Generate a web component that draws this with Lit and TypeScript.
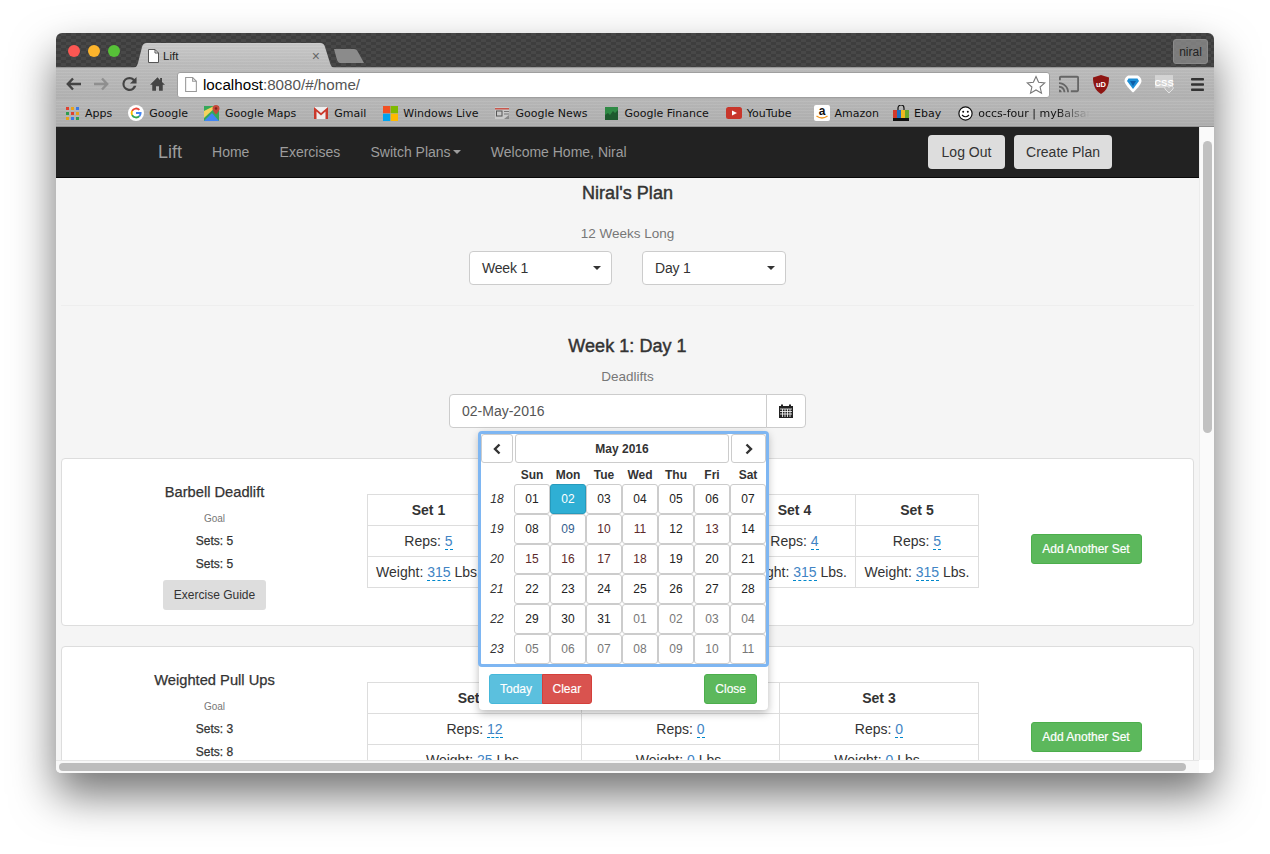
import { LitElement, html, css, svg } from "lit";
import { customElement } from "lit/decorators.js";

type Mark = { name: string; icon: unknown; cls?: string; ml?: number };

const appsIcon = svg`<svg width="13" height="13" viewBox="0 0 13 13">
  <rect x="0" y="0" width="3" height="3" fill="#e0402f"/><rect x="5" y="0" width="3" height="3" fill="#e8a21b"/><rect x="10" y="0" width="3" height="3" fill="#3b78e7"/>
  <rect x="0" y="5" width="3" height="3" fill="#2d9d4e"/><rect x="5" y="5" width="3" height="3" fill="#e0402f"/><rect x="10" y="5" width="3" height="3" fill="#e8a21b"/>
  <rect x="0" y="10" width="3" height="3" fill="#e8a21b"/><rect x="5" y="10" width="3" height="3" fill="#3b78e7"/><rect x="10" y="10" width="3" height="3" fill="#2d9d4e"/></svg>`;
const googleIcon = svg`<svg width="16" height="16" viewBox="0 0 16 16">
  <circle cx="8" cy="8" r="8" fill="#fff"/>
  <path d="M11.4 4.9A4.6 4.6 0 0 0 4.1 5.9" fill="none" stroke="#ea4335" stroke-width="1.9"/>
  <path d="M4.1 5.9a4.6 4.6 0 0 0 0 4.2" fill="none" stroke="#fbbc05" stroke-width="1.9"/>
  <path d="M4.1 10.1a4.6 4.6 0 0 0 7.3 1" fill="none" stroke="#34a853" stroke-width="1.9"/>
  <path d="M11.4 11.1A4.6 4.6 0 0 0 12.6 8H8" fill="none" stroke="#4285f4" stroke-width="1.9"/></svg>`;
const mapsIcon = svg`<svg width="16" height="16" viewBox="0 0 16 16">
  <rect y="1" width="15" height="15" fill="#35a85a"/>
  <path d="M0 16 L8 8 L15 16Z" fill="#4285f4"/>
  <path d="M0 6 L10 1 H13 L0 13Z" fill="#f4d35e"/>
  <path d="M12 0a3.5 3.5 0 0 1 3.5 3.5C15.500 6 12 9.500 12 9.500S8.500 6 8.500 3.500A3.500 3.500 0 0 1 12 0Z" fill="#c5483a"/>
  <circle cx="12" cy="3.500" r="1.200" fill="#7c231a"/></svg>`;
const gmailIcon = svg`<svg width="14" height="12" viewBox="0 0 14 12">
  <rect width="14" height="12" fill="#eee"/>
  <path d="M0 0 L7 6 L14 0 V12 H11.500 V4.500 L7 8.500 L2.500 4.500 V12 H0Z" fill="#c9392c"/></svg>`;
const winIcon = svg`<svg width="15" height="15" viewBox="0 0 15 15">
  <rect width="7.300" height="7.300" fill="#f25022"/><rect x="7.700" width="7.300" height="7.300" fill="#7fba00"/>
  <rect y="7.700" width="7.300" height="7.300" fill="#00a4ef"/><rect x="7.700" y="7.700" width="7.300" height="7.300" fill="#ffb900"/></svg>`;
const newsIcon = svg`<svg width="14" height="12" viewBox="0 0 14 12">
  <rect width="14" height="12" fill="#c9c9c9"/><rect y="1" width="14" height="1.500" fill="#c8574c"/>
  <rect x="1.500" y="4" width="5.500" height="5" fill="none" stroke="#555" stroke-width="1"/>
  <rect x="9" y="4" width="5" height="1" fill="#777"/><rect x="9" y="6.500" width="5" height="1" fill="#777"/>
  <path d="M9 12 L14 8 V12Z" fill="#888"/></svg>`;
const financeIcon = svg`<svg width="13" height="13" viewBox="0 0 13 13">
  <rect width="13" height="13" fill="#2f8a45"/>
  <path d="M0 8 L3 6 L5 8 L8 4 L10 6 L13 3 V13 H0Z" fill="#1e5a2e"/></svg>`;
const ytIcon = svg`<svg width="16" height="12" viewBox="0 0 16 12">
  <rect width="16" height="12" rx="2.500" fill="#c8362b"/><path d="M6 3.500 L11 6 L6 8.500Z" fill="#fff"/></svg>`;
const amazonIcon = svg`<svg width="16" height="16" viewBox="0 0 16 16">
  <rect width="16" height="16" rx="2" fill="#fff"/>
  <text x="8" y="10" font-family="Liberation Sans" font-weight="700" font-size="12" text-anchor="middle" fill="#111">a</text>
  <path d="M2.500 11 Q8 15 13.500 11" fill="none" stroke="#f0961e" stroke-width="1.500"/></svg>`;
const ebayIcon = svg`<svg width="16" height="16" viewBox="0 0 16 16">
  <path d="M5 5 V3 a3 3 0 0 1 6 0 V5" fill="none" stroke="#111" stroke-width="1.200"/>
  <rect y="5" width="4" height="8" fill="#d2392b"/><rect x="4" y="5" width="4" height="8" fill="#1f6fc0"/>
  <rect x="8" y="5" width="4" height="8" fill="#efb71f"/><rect x="12" y="5" width="4" height="8" fill="#6aa62d"/>
  <rect y="13" width="16" height="3" fill="#111"/></svg>`;
const smileIcon = svg`<svg width="15" height="15" viewBox="0 0 15 15">
  <circle cx="7.500" cy="7.500" r="6.600" fill="#fff" stroke="#111" stroke-width="1.200"/>
  <circle cx="5.200" cy="5.800" r="1" fill="#111"/><circle cx="9.800" cy="5.800" r="1" fill="#111"/>
  <path d="M4 9 Q7.500 12.500 11 9" fill="none" stroke="#111" stroke-width="1.100"/></svg>`;

const marks: Mark[] = [
  { name: "Apps", icon: appsIcon },
  { name: "Google", icon: googleIcon },
  { name: "Google Maps", icon: mapsIcon },
  { name: "Gmail", icon: gmailIcon, ml: 1 },
  { name: "Windows Live", icon: winIcon },
  { name: "Google News", icon: newsIcon },
  { name: "Google Finance", icon: financeIcon },
  { name: "YouTube", icon: ytIcon, ml: 1 },
  { name: "Amazon", icon: amazonIcon, ml: 6 },
  { name: "Ebay", icon: ebayIcon, ml: -2 },
  { name: "occs-four | myBalsan", icon: smileIcon, cls: "fade" },
];

const docIcon = (w: number, h: number, stroke: string) => svg`<svg width=${w} height=${h} viewBox="0 0 11 14">
  <path d="M.5.500H7L10.500 4V13.500H.5Z" fill="#fff" stroke=${stroke}/><path d="M7 .5V4H10.500" fill="none" stroke=${stroke}/></svg>`;

type Day = { d: string; k?: string };
const tint = new Set(["10", "11", "13", "15", "16", "17", "18"]);
const mk = (n: number, k?: string): Day => {
  const d = String(n).padStart(2, "0");
  if (k) return { d, k };
  if (d === "02") return { d, k: "sel" };
  if (d === "09") return { d, k: "blue" };
  if (tint.has(d)) return { d, k: "red" };
  return { d };
};
const weeks: { w: number; days: Day[] }[] = [
  { w: 18, days: [1, 2, 3, 4, 5, 6, 7].map((n) => mk(n)) },
  { w: 19, days: [8, 9, 10, 11, 12, 13, 14].map((n) => mk(n)) },
  { w: 20, days: [15, 16, 17, 18, 19, 20, 21].map((n) => mk(n)) },
  { w: 21, days: [22, 23, 24, 25, 26, 27, 28].map((n) => mk(n)) },
  { w: 22, days: [...[29, 30, 31].map((n) => mk(n)), ...[1, 2, 3, 4].map((n) => mk(n, "off"))] },
  { w: 23, days: [5, 6, 7, 8, 9, 10, 11].map((n) => mk(n, "off")) },
];

const exercises = [
  { name: "Barbell Deadlift", sets: 5, goal: 5, widths: [122, 122, 122, 122, 123], rows: [[5, 315], [5, 315], [5, 315], [4, 315], [5, 315]] },
  { name: "Weighted Pull Ups", sets: 3, goal: 8, widths: [214, 198, 199], rows: [[12, 25], [0, 0], [0, 0]] },
];

@customElement("app-root")
export class AppRoot extends LitElement {
  static styles = css`
    :host { display: block; box-sizing: border-box; width: 1270px; height: 854px; padding: 33px 56px 0; background: #fff; overflow: hidden; font-family: "Liberation Sans", Arial, sans-serif; font-size: 14px; color: #333; }
    * { box-sizing: border-box; }
    .window { width: 1158px; height: 740px; display: flex; flex-direction: column; border-radius: 6px 6px 5px 5px; box-shadow: 0 22px 44px rgba(0,0,0,.55); overflow: hidden; background: #fff; }

    .tabstrip { height: 35px; flex: none; display: flex; align-items: flex-end; padding-left: 12px; background: repeating-conic-gradient(#484848 0 25%, #3e3e3e 0 50%) 0 0 / 10px 6px; border-bottom: 1px solid #999; }
    .lights { display: flex; gap: 8px; align-self: flex-start; margin-top: 12px; }
    .light { width: 12px; height: 12px; border-radius: 50%; }
    .r { background: #fc5753; } .y { background: #fdb42c; } .g { background: #57c138; }
    .tab { width: 203px; height: 25px; margin: 0 0 -1px 12px; display: flex; align-items: center; padding: 0 15px 0 16px; gap: 4px; font-size: 11.500px; color: #222;
      background: repeating-linear-gradient(0deg, rgba(255,255,255,.04) 0 1px, rgba(0,0,0,.02) 1px 3px), linear-gradient(#cbcbcb, #bbb);
      clip-path: path("M0 25 C4 25 5 23 6 20 L10 4 C11 1 12 0 15 0 L188 0 C191 0 192 1 193 4 L198 20 C199 23 200 25 203 25 Z"); }
    .tab .ttl { flex: 1; }
    .tab .x { font-size: 14px; color: #666; line-height: 1; }
    .newtab { width: 30px; height: 14px; margin: 0 0 4px -1px; background: #8b8b8b; clip-path: path("M0 0 H20 C22 0 23 1 24 3 L30 14 H6 C5 14 4 13 3 11 Z"); }
    .profile { margin: 0 6px 3px auto; width: 35px; height: 25px; display: flex; align-items: center; justify-content: center; font-size: 12px; color: #222; background: rgba(150,150,150,.7); border: 1px solid #8a8a8a; border-radius: 3px; }

    .toolbar { height: 32px; flex: none; display: flex; align-items: center; padding-left: 10px; background: repeating-linear-gradient(0deg, rgba(255,255,255,.04) 0 1px, rgba(0,0,0,.02) 1px 3px), linear-gradient(#bdbdbd, #b2b2b2); }
    .nav-ic { width: 15px; height: 16px; margin-right: 13px; display: flex; }
    .omni { width: 873px; height: 26px; flex: none; margin: 1px 0 0 -1px; background: #fff; border: 1px solid #9f9f9f; border-radius: 3px; display: flex; align-items: center; padding: 0 3px 0 7px; font-size: 15.200px; color: #000; }
    .omni .url { margin-left: 6px; flex: 1; }
    .omni .url span { color: #555; }
    .slots { display: flex; margin-left: 3px; }
    .slot { width: 32px; height: 22px; display: flex; align-items: center; justify-content: center; }

    .marks { flex: none; display: flex; align-items: center; padding-left: 8px; gap: 16px; border-bottom: 1px solid #8f8f8f; height: 27px; background: repeating-linear-gradient(0deg, rgba(255,255,255,.04) 0 1px, rgba(0,0,0,.02) 1px 3px), linear-gradient(#b9b9b9, #b0b0b0); font-family: "DejaVu Sans", sans-serif; font-size: 11px; color: #111; }
    .mark { display: flex; align-items: center; gap: 5px; white-space: nowrap; }
    .ib { width: 16px; height: 16px; flex: none; display: flex; align-items: center; justify-content: center; }
    .ib svg { display: block; flex: none; }
    .fade { width: 112px; overflow: hidden; -webkit-mask-image: linear-gradient(90deg, #000 70%, transparent 100%); mask-image: linear-gradient(90deg, #000 70%, transparent 100%); }

    .viewport { flex: 1; min-height: 0; display: grid; grid-template-columns: 1143px 15px; grid-template-rows: 633px 13px; }
    .page { overflow: hidden; background: #f5f5f5; }
    .vbar { background: #fafafa; border-left: 1px solid #ececec; padding: 14px 2px 0 3px; }
    .vthumb { height: 292px; background: #c1c1c1; border-radius: 5px; }
    .hbar { background: #f8f8f8; border-top: 1px solid #e6e6e6; padding: 2px 13px 2px 3px; }
    .hthumb { height: 8px; background: #bdbdbd; border-radius: 4px; }
    .corner { background: #fff; }

    .navbar { height: 51px; background: #222; border-bottom: 1px solid #080808; display: flex; align-items: center; padding: 0 87px 0 102px; color: #9d9d9d; }
    .brand { font-size: 18px; margin-right: 30px; }
    .link { margin-right: 30.200px; display: flex; align-items: center; white-space: nowrap; }
    .caret { width: 0; height: 0; margin-left: 2px; border: 4px solid transparent; border-top-color: #9d9d9d; border-bottom: 0; }
    .navbtns { margin-left: auto; display: flex; gap: 9px; }
    .gbtn { height: 34px; display: flex; align-items: center; justify-content: center; background: #ddd; color: #333; border-radius: 4px; }
    .logout { width: 77px; }
    .create { width: 98px; }

    .body { padding: 5px 5px 0; display: flex; flex-direction: column; align-items: center; }
    h2 { margin: 0; font-size: 18px; line-height: 20px; font-weight: 400; letter-spacing: .05px; -webkit-text-stroke: .45px #333; }
    .muted { color: #777; line-height: 20px; font-size: 13.500px; }
    .plan-sub { margin-top: 21px; }
    .selects { margin-top: 7px; display: flex; gap: 30px; }
    .select { width: 143px; height: 34px; padding: 0 10px 0 12px; display: flex; align-items: center; justify-content: space-between; background: #fff; border: 1px solid #ccc; border-radius: 4px; letter-spacing: -.2px; }
    .select.w2 { width: 144px; }
    .select i { width: 0; height: 0; border: 4.500px solid transparent; border-top-color: #333; border-bottom: 0; }
    hr { width: 100%; height: 1px; margin: 20px 0 0; border: 0; background: #eee; }
    .week { margin-top: 30px; }
    .sub2 { margin-top: 11px; }
    .group { position: relative; margin-top: 7px; width: 357px; height: 34px; display: flex; }
    .input { flex: 1; padding-left: 12px; display: flex; align-items: center; color: #555; background: #fff; border: 1px solid #ccc; border-radius: 4px 0 0 4px; }
    .addon { width: 40px; margin-left: -1px; display: flex; align-items: center; justify-content: center; background: #fff; border: 1px solid #ccc; border-radius: 0 4px 4px 0; }

    .pop { position: absolute; z-index: 5; left: 30px; top: 37px; width: 289px; height: 279px; background: #fff; border-radius: 4px; box-shadow: 0 3px 9px rgba(0,0,0,.28); }
    .ring { margin: 0 -1px; height: 236px; border: 3px solid #7eb6f2; border-radius: 4px; background: #fff; display: grid; grid-template-columns: 33px repeat(7, 36px); grid-template-rows: 30px 20px repeat(6, 30px); font-size: 12px; }
    .cbtn { border: 1px solid #ccc; border-radius: 3px; display: flex; align-items: center; justify-content: center; background: #fff; color: #333; }
    .prev { margin: 0 1px 1px 0; }
    .ttlbtn { grid-column: 2 / span 6; margin: 0 1px 1px 1px; font-weight: 700; }
    .next { margin: 0 0 1px 1px; }
    .dow { font-weight: 700; display: flex; align-items: flex-end; justify-content: center; padding-bottom: 2px; }
    .wk { font-style: italic; display: flex; align-items: center; justify-content: center; color: #333; padding-right: 1px; }
    .day { color: #222; }
    .day.off { color: #777; }
    .day.blue { color: #34618f; }
    .day.red { color: #5c2a2a; }
    .day.sel { background: #2fafd4; border-color: #269abc; color: #fff; }
    .popfoot { display: flex; padding: 7px 11px 0 10px; font-size: 12px; color: #fff; -webkit-text-stroke: .15px #fff; }
    .pb { height: 30px; padding: 0 10px; display: flex; align-items: center; border: 1px solid; border-radius: 3px; }
    .today { background: #5bc0de; border-color: #46b8da; border-radius: 3px 0 0 3px; }
    .clear { background: #d9534f; border-color: #d43f3a; border-radius: 0 3px 3px 0; margin-left: -1px; padding: 0 9.500px; }
    .close { background: #5cb85c; border-color: #4cae4c; margin-left: auto; }

    .card { width: 100%; flex: none; height: 168px; background: #fff; border: 1px solid #ddd; border-radius: 4px; display: grid; grid-template-columns: 305px 612px 1fr; }
    .first { margin-top: 30px; }
    .next-card { margin-top: 20px; height: 168px; }
    .left { display: flex; flex-direction: column; align-items: center; padding-top: 23px; }
    .name { line-height: 20px; font-size: 14.700px; -webkit-text-stroke: .25px #333; }
    .goal { margin-top: 10px; font-size: 10px; line-height: 14px; color: #777; }
    .setsline { margin-top: 9px; font-size: 12px; line-height: 14px; -webkit-text-stroke: .25px #333; }
    .goal + .setsline { margin-top: 8px; }
    .guide { margin-top: 9px; height: 30px; padding: 0 11px; font-size: 12px; display: flex; align-items: center; background: #ddd; border-radius: 3px; }
    table { margin-top: 35px; width: 611px; height: 94px; border-collapse: collapse; table-layout: fixed; align-self: start; }
    th, td { border: 1px solid #ddd; height: 31px; padding: 0; text-align: center; font-weight: 400; white-space: nowrap; }
    th { font-weight: 700; }
    .ed { color: #4184c4; border-bottom: 1px dashed #08c; }
    .rt { display: flex; justify-content: center; padding: 75px 0 0 0; align-items: flex-start; }
    .add { height: 30px; width: 111px; display: flex; align-items: center; justify-content: center; font-size: 12px; color: #fff; -webkit-text-stroke: .2px #fff; background: #5cb85c; border: 1px solid #4cae4c; border-radius: 3px; }
  `;

  private card(ex: (typeof exercises)[number], cls: string) {
    return html`<section class="card ${cls}">
      <div class="left">
        <div class="name">${ex.name}</div>
        <div class="goal">Goal</div>
        <div class="setsline">Sets: ${ex.sets}</div>
        <div class="setsline">Sets: ${ex.goal}</div>
        <div class="guide">Exercise Guide</div>
      </div>
      <table>
        <colgroup>${ex.widths.map((w) => html`<col style="width:${w}px" />`)}</colgroup>
        <tr>${ex.rows.map((_, i) => html`<th>Set ${i + 1}</th>`)}</tr>
        <tr>${ex.rows.map((r) => html`<td>Reps: <span class="ed">${r[0]}</span></td>`)}</tr>
        <tr>${ex.rows.map((r) => html`<td>Weight: <span class="ed">${r[1]}</span> Lbs.</td>`)}</tr>
      </table>
      <div class="rt"><div class="add">Add Another Set</div></div>
    </section>`;
  }

  render() {
    return html`<div class="window">
      <div class="tabstrip">
        <div class="lights"><div class="light r"></div><div class="light y"></div><div class="light g"></div></div>
        <div class="tab">${docIcon(11, 14, "#555")}<span class="ttl">Lift</span><span class="x">×</span></div>
        <div class="newtab"></div>
        <div class="profile">niral</div>
      </div>
      <div class="toolbar">
        <span class="nav-ic"><svg width="15" height="16" viewBox="0 0 15 16"><path d="M7 2.500 L1.800 8 L7 13.500 M2 8 H15" fill="none" stroke="#444" stroke-width="2.400"/></svg></span>
        <span class="nav-ic"><svg width="15" height="16" viewBox="0 0 15 16"><path d="M8 2.500 L13.200 8 L8 13.500 M13 8 H0" fill="none" stroke="#8f8f8f" stroke-width="2.400"/></svg></span>
        <span class="nav-ic"><svg width="16" height="16" viewBox="3.500 3.500 17 17"><path fill="#444" d="M17.650 6.350A7.950 7.950 0 0 0 12 4a8 8 0 1 0 7.730 10h-2.900A5.400 5.400 0 1 1 12 6.600c1.500 0 2.800.6 3.800 1.600L12.500 11.500H20V4z"/></svg></span>
        <span class="nav-ic"><svg width="16" height="16" viewBox="2 3 20 18"><path fill="#444" d="M10 21v-6h4v6h5v-8h3L18 9.400V4h-2.500v3.100L12 3 2 13h3v8z"/></svg></span>
        <div class="omni">
          ${docIcon(12, 15, "#999")}
          <div class="url">localhost<span>:8080/#/home/</span></div>
          <svg width="20" height="20" viewBox="0 0 20 20"><path d="M10 1.500 L12.600 7.300 L18.800 7.900 L14.100 12 L15.500 18.200 L10 15 L4.500 18.200 L5.900 12 L1.200 7.900 L7.400 7.300Z" fill="#fff" stroke="#777" stroke-width="1.100"/></svg>
        </div>
        <div class="slots">
          <span class="slot"><svg width="20" height="18" viewBox="1 3 22 18"><path fill="#666" d="M21 3H3c-1.100 0-2 .9-2 2v3h2V5h18v14h-7v2h7c1.100 0 2-.9 2-2V5c0-1.100-.9-2-2-2zM1 18v3h3c0-1.660-1.340-3-3-3zm0-4v2c2.760 0 5 2.240 5 5h2c0-3.870-3.130-7-7-7zm0-4v2c4.970 0 9 4.030 9 9h2c0-6.080-4.930-11-11-11z"/></svg></span>
          <span class="slot"><svg width="18" height="19" viewBox="0 0 18 19"><path d="M9 0 L17 2.500 C17 10 15 15.500 9 19 C3 15.500 1 10 1 2.500Z" fill="#8e1512"/><text x="9" y="11.500" font-family="Liberation Sans" font-weight="700" font-size="7.500" text-anchor="middle" fill="#fff">uD</text></svg></span>
          <span class="slot"><svg width="18" height="18" viewBox="0 0 18 18"><path d="M5 .5 H13 C15 .5 17.500 3 17.500 6 C17.500 9 12 15 9 17.500 C6 15 .5 9 .5 6 C.5 3 3 .5 5 .5Z" fill="#fff"/><path d="M4.500 3.500 H13.500 L15 6 L9 14 L3 6Z" fill="#1e8fd6"/><path d="M6 6 H12 L9 11Z" fill="#0c5ea8"/></svg></span>
          <span class="slot"><svg width="20" height="19" viewBox="0 0 20 19"><rect width="18" height="13" fill="#d3d3d3"/><text x="9" y="10.500" font-family="Liberation Sans" font-weight="700" font-size="9.500" text-anchor="middle" fill="#fff">CSS</text><path d="M14 18 L10 14 C9 12 11 10.500 12.500 11.500 L14 12.500 L15.500 11.500 C17 10.500 19 12 18 14Z" fill="#bdbdbd" stroke="#e2e2e2"/></svg></span>
          <span class="slot"><svg width="13" height="13" viewBox="0 0 13 13"><rect width="13" height="2.600" rx=".8" fill="#333"/><rect y="5.200" width="13" height="2.600" rx=".8" fill="#333"/><rect y="10.400" width="13" height="2.600" rx=".8" fill="#333"/></svg></span>
        </div>
      </div>
      <div class="marks">
        ${marks.map((m) => html`<div class="mark" style="margin-left:${m.ml ?? 0}px"><span class="ib">${m.icon}</span><span class=${m.cls ?? ""}>${m.name}</span></div>`)}
      </div>
      <div class="viewport">
        <div class="page">
          <nav class="navbar">
            <span class="brand">Lift</span>
            <span class="link">Home</span>
            <span class="link">Exercises</span>
            <span class="link">Switch Plans<i class="caret"></i></span>
            <span class="link">Welcome Home, Niral</span>
            <div class="navbtns"><div class="gbtn logout">Log Out</div><div class="gbtn create">Create Plan</div></div>
          </nav>
          <main class="body">
            <h2>Niral's Plan</h2>
            <div class="muted plan-sub">12 Weeks Long</div>
            <div class="selects">
              <div class="select"><span>Week 1</span><i></i></div>
              <div class="select w2"><span>Day 1</span><i></i></div>
            </div>
            <hr />
            <h2 class="week">Week 1: Day 1</h2>
            <div class="muted sub2">Deadlifts</div>
            <div class="group">
              <div class="input">02-May-2016</div>
              <div class="addon"><svg width="14" height="14" viewBox="0 0 14 14"><path fill="#222" d="M0 2h2V0.500h2V2h6V0.500h2V2h2v12H0z"/><path stroke="#fff" stroke-width=".8" d="M1 5h12M1 7.500h12M1 10h12M3.500 5v8M6 5v8M8.500 5v8M11 5v8" fill="none"/></svg></div>
              <div class="pop">
                <div class="ring">
                  <div class="cbtn prev"><svg width="10" height="12" viewBox="0 0 10 12"><path d="M7.500 1.500 L3 6 L7.500 10.500" fill="none" stroke="#333" stroke-width="2.400"/></svg></div>
                  <div class="cbtn ttlbtn">May 2016</div>
                  <div class="cbtn next"><svg width="10" height="12" viewBox="0 0 10 12"><path d="M2.500 1.500 L7 6 L2.500 10.500" fill="none" stroke="#333" stroke-width="2.400"/></svg></div>
                  <div></div>
                  ${["Sun", "Mon", "Tue", "Wed", "Thu", "Fri", "Sat"].map((d) => html`<div class="dow">${d}</div>`)}
                  ${weeks.map(
                    (w) => html`<div class="wk">${w.w}</div>${w.days.map((d) => html`<div class="cbtn day ${d.k ?? ""}">${d.d}</div>`)}`
                  )}
                </div>
                <div class="popfoot">
                  <div class="pb today">Today</div>
                  <div class="pb clear">Clear</div>
                  <div class="pb close">Close</div>
                </div>
              </div>
            </div>
            ${exercises.map((ex, i) => this.card(ex, i === 0 ? "first" : "next-card"))}
          </main>
        </div>
        <div class="vbar"><div class="vthumb"></div></div>
        <div class="hbar"><div class="hthumb"></div></div>
        <div class="corner"></div>
      </div>
    </div>`;
  }
}
